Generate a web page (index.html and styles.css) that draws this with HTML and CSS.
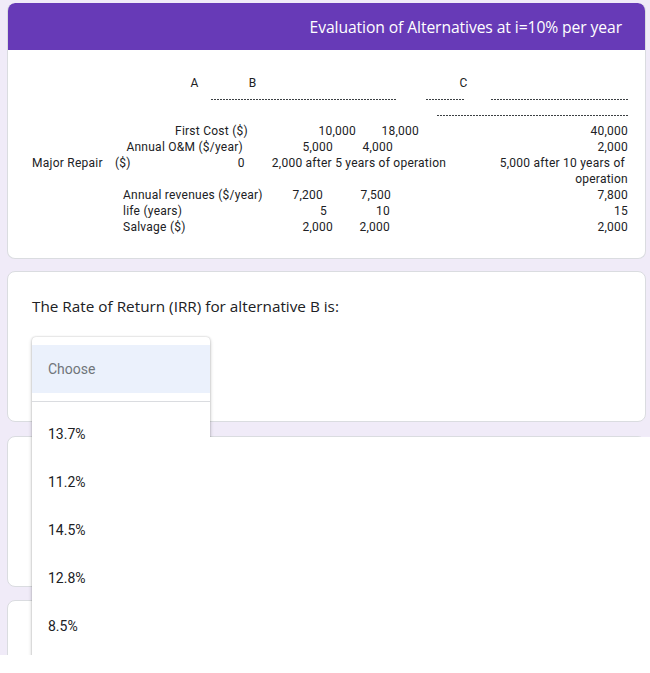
FILE: index.html
```html
<!DOCTYPE html>
<html>
<head>
<meta charset="utf-8">
<link rel="stylesheet" href="styles.css">
</head>
<body>
<div class="page">
  <div class="card card-intro">
    <div class="card-head">
      <div class="title">Evaluation of Alternatives at i=10% per year</div>
    </div>
    <div class="table">
      <div class="row">
        <span class="h-a">A</span><span class="h-b">B</span><span class="h-c">C</span>
      </div>
      <div class="row">
        <span class="dash d1"></span><span class="dash d2"></span><span class="dash d3"></span>
      </div>
      <div class="row">
        <span class="dash d4"></span>
      </div>
      <div class="row">
        <span class="r fc1">First Cost ($)</span><span class="r fc2">10,000</span><span class="r fc3">18,000</span><span class="last">40,000</span>
      </div>
      <div class="row">
        <span class="r om1">Annual O&amp;M ($/year)</span><span class="r om2">5,000</span><span class="r om3">4,000</span><span class="last">2,000</span>
      </div>
      <div class="row">
        <span class="mr-name">Major Repair</span><span>($)</span><span class="r mr0">0</span><span class="mr-b">2,000 after 5 years of operation</span><span class="last mr-c">5,000 after 10 years of</span>
      </div>
      <div class="row">
        <span class="last">operation</span>
      </div>
      <div class="row">
        <span class="lbl">Annual revenues ($/year)</span><span class="r rv1">7,200</span><span class="r rv2">7,500</span><span class="last">7,800</span>
      </div>
      <div class="row">
        <span class="lbl">life (years)</span><span class="r lf1">5</span><span class="r lf2">10</span><span class="last">15</span>
      </div>
      <div class="row">
        <span class="lbl">Salvage ($)</span><span class="r sv1">2,000</span><span class="r sv2">2,000</span><span class="last">2,000</span>
      </div>
    </div>
  </div>

  <div class="card card-q">
    <div class="question">The Rate of Return (IRR) for alternative B is:</div>
  </div>

  <div class="card card-3"></div>
  <div class="card card-4"></div>

  <div class="menu">
    <div class="opt opt-choose">Choose</div>
    <div class="sep"></div>
    <div class="opt">13.7%</div>
    <div class="opt">11.2%</div>
    <div class="opt">14.5%</div>
    <div class="opt">12.8%</div>
    <div class="opt">8.5%</div>
  </div>
  <div class="blank"></div>
</div>
</body>
</html>
```

FILE: styles.css
```css
html, body {
  margin: 0;
  padding: 0;
  background: #ffffff;
}

.page {
  position: relative;
  height: 655px;
  overflow: hidden;
  background: #f0ebf8;
  padding: 3px 4px 0 7px;
  box-sizing: border-box;
}

.card {
  background: #ffffff;
  border: 1px solid #dadce0;
  border-radius: 8px;
  width: 639px;
  box-sizing: border-box;
}

.card-intro {
  border: none;
  border-left: 1px solid #dadce0;
  border-right: 1px solid #dadce0;
  border-bottom: 1px solid #dadce0;
  height: 256px;
  overflow: hidden;
}

.card-head {
  background: #673ab7;
  height: 47px;
  margin: 0 -1px;
  border-radius: 8px 8px 0 0;
  display: flex;
  align-items: center;
  justify-content: flex-end;
  padding-right: 24px;
}

.title {
  color: #ffffff;
  font-family: "Open Sans", sans-serif;
  font-size: 15.7px;
  letter-spacing: -0.1px;
}

.table {
  padding: 25px 17px 0 0;
  font-family: Roboto, sans-serif;
  font-size: 12px;
  letter-spacing: 0.25px;
  color: #202124;
}

.row {
  display: flex;
  height: 16px;
  line-height: 16px;
  white-space: nowrap;
  align-items: center;
}

.row span {
  flex: none;
}

.r {
  text-align: right;
}

.last {
  margin-left: auto;
}

.h-a { margin-left: 182px; width: 9px; text-align: center; }
.h-b { margin-left: 49px; width: 9px; text-align: center; }
.h-c { margin-left: 202px; width: 9px; text-align: center; }

.dash {
  height: 1px;
  background: repeating-linear-gradient(to right, #3c4043 0 2px, transparent 2px 3px);
}
.d1 { margin-left: 203px; width: 185px; }
.d2 { margin-left: 30px; width: 39px; }
.d3 { margin-left: 26px; width: 138px; }
.d4 { margin-left: 429px; width: 192px; }

.fc1 { width: 240px; }
.fc2 { width: 108px; }
.fc3 { width: 63px; }

.om1 { width: 235px; }
.om2 { width: 90px; }
.om3 { width: 60px; }

.mr-name { margin-left: 24px; width: 83px; }
.mr0 { width: 114px; }
.mr-b { margin-left: 27px; }
.mr-c { padding-right: 3px; }

.lbl { margin-left: 115px; width: 160px; }
.rv1 { width: 40px; }
.rv2 { width: 68px; }
.lf1 { width: 44px; }
.lf2 { width: 63px; }
.sv1 { width: 50px; }
.sv2 { width: 57px; }

.card-q {
  margin-top: 12px;
  height: 151px;
  padding: 22px 0 0 24px;
}

.question {
  font-family: "Open Sans", sans-serif;
  font-size: 15.3px;
  color: #202124;
  line-height: 24px;
}

.card-3 {
  margin-top: 14px;
  height: 151px;
}

.card-4 {
  margin-top: 13px;
  height: 151px;
}

.menu {
  position: absolute;
  left: 32px;
  top: 337px;
  width: 178px;
  height: 330px;
  background: #ffffff;
  border-radius: 4px 4px 0 0;
  box-shadow: 0 2px 4px rgba(0, 0, 0, 0.2), 0 0 2px rgba(0, 0, 0, 0.25);
  padding-top: 8px;
  box-sizing: border-box;
  z-index: 2;
  font-family: Roboto, sans-serif;
  font-size: 14px;
  color: #202124;
}

.opt {
  height: 48px;
  line-height: 48px;
  padding-left: 16px;
}

.opt-choose {
  background: #ebf1fc;
  color: #70757a;
}

.sep {
  height: 1px;
  background: #dadce0;
  margin: 8px 0;
}

.blank {
  position: absolute;
  left: 210px;
  top: 437px;
  right: 0;
  height: 218px;
  background: #ffffff;
  z-index: 3;
}
```
